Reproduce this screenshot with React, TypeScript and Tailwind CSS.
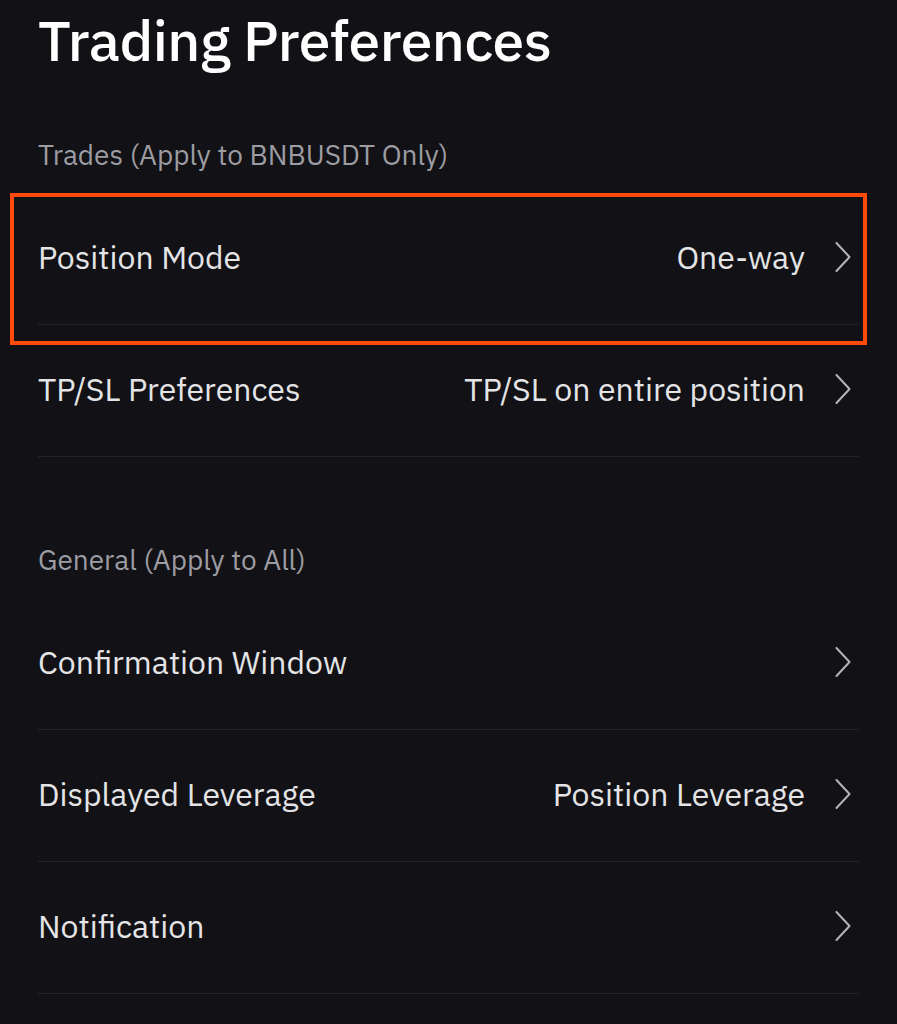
import React from "react";

interface RowProps {
  label: string;
  value?: string;
  highlighted?: boolean;
}

function Chevron() {
  return (
    <svg width="16" height="30" viewBox="0 0 16 30" fill="none" className="shrink-0">
      <polyline points="1.5,1 14.5,15 1.5,29" stroke="#b4b4b8" strokeWidth="2" strokeLinecap="round" strokeLinejoin="round" />
    </svg>
  );
}

function Row({ label, value, highlighted }: RowProps) {
  return (
    <div className="relative">
      <div className="h-[132px] pb-[3px] flex items-center justify-between border-b border-[#222228]">
        <span className="text-[32px] text-[#e4e4e6]">{label}</span>
        <div className="flex items-center gap-[30px] pr-[8px]">
          {value && <span className="text-[32px] text-[#e4e4e6]">{value}</span>}
          <Chevron />
        </div>
      </div>
      {highlighted && (
        <div className="absolute top-0 bottom-[-20px] left-[-28px] right-[-8px] border-4 border-[#ff4a0c] pointer-events-none" />
      )}
    </div>
  );
}

function SectionLabel({ children }: { children: React.ReactNode }) {
  return <div className="text-[28px] leading-[36px] text-[#9c9ca2] mb-[20px]">{children}</div>;
}

export default function App() {
  return (
    <div className="min-h-screen bg-[#111116] px-[38px] font-['IBM_Plex_Sans','Noto_Sans',sans-serif] overflow-hidden">
      {/* header */}
      <h1 className="text-[57px] leading-[80px] font-medium text-white tracking-[-0.5px]">Trading Preferences</h1>

      {/* trades */}
      <div className="mt-[57px]">
        <SectionLabel>Trades (Apply to BNBUSDT Only)</SectionLabel>
        <Row label="Position Mode" value="One-way" highlighted />
        <Row label="TP/SL Preferences" value="TP/SL on entire position" />
      </div>

      {/* general */}
      <div className="mt-[85px]">
        <SectionLabel>General (Apply to All)</SectionLabel>
        <Row label="Confirmation Window" />
        <Row label="Displayed Leverage" value="Position Leverage" />
        <Row label="Notification" />
      </div>
    </div>
  );
}
